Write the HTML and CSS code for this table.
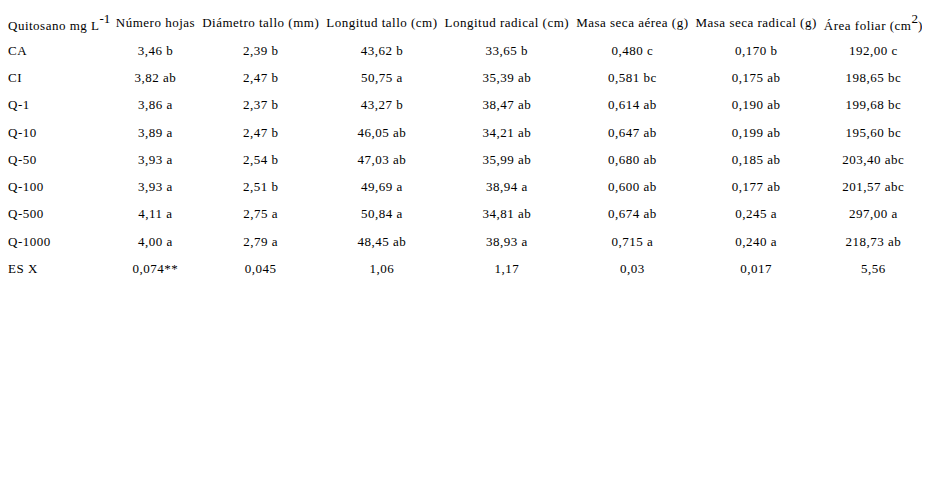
FILE: index.html
```html
<!DOCTYPE html>
<html>
<head>
<meta charset="utf-8">
<link rel="stylesheet" href="styles.css">
</head>
<body>
<table class="data">
  <thead>
    <tr>
      <th class="first">Quitosano mg L<sup>-1</sup></th>
      <th>Número hojas</th>
      <th>Diámetro tallo (mm)</th>
      <th>Longitud tallo (cm)</th>
      <th>Longitud radical (cm)</th>
      <th>Masa seca aérea (g)</th>
      <th>Masa seca radical (g)</th>
      <th>Área foliar (cm<sup>2</sup>)</th>
    </tr>
  </thead>
  <tbody>
    <tr><td class="first">CA</td><td>3,46 b</td><td>2,39 b</td><td>43,62 b</td><td>33,65 b</td><td>0,480 c</td><td>0,170 b</td><td>192,00 c</td></tr>
    <tr><td class="first">CI</td><td>3,82 ab</td><td>2,47 b</td><td>50,75 a</td><td>35,39 ab</td><td>0,581 bc</td><td>0,175 ab</td><td>198,65 bc</td></tr>
    <tr><td class="first">Q-1</td><td>3,86 a</td><td>2,37 b</td><td>43,27 b</td><td>38,47 ab</td><td>0,614 ab</td><td>0,190 ab</td><td>199,68 bc</td></tr>
    <tr><td class="first">Q-10</td><td>3,89 a</td><td>2,47 b</td><td>46,05 ab</td><td>34,21 ab</td><td>0,647 ab</td><td>0,199 ab</td><td>195,60 bc</td></tr>
    <tr><td class="first">Q-50</td><td>3,93 a</td><td>2,54 b</td><td>47,03 ab</td><td>35,99 ab</td><td>0,680 ab</td><td>0,185 ab</td><td>203,40 abc</td></tr>
    <tr><td class="first">Q-100</td><td>3,93 a</td><td>2,51 b</td><td>49,69 a</td><td>38,94 a</td><td>0,600 ab</td><td>0,177 ab</td><td>201,57 abc</td></tr>
    <tr><td class="first">Q-500</td><td>4,11 a</td><td>2,75 a</td><td>50,84 a</td><td>34,81 ab</td><td>0,674 ab</td><td>0,245 a</td><td>297,00 a</td></tr>
    <tr><td class="first">Q-1000</td><td>4,00 a</td><td>2,79 a</td><td>48,45 ab</td><td>38,93 a</td><td>0,715 a</td><td>0,240 a</td><td>218,73 ab</td></tr>
    <tr><td class="first">ES X</td><td>0,074**</td><td>0,045</td><td>1,06</td><td>1,17</td><td>0,03</td><td>0,017</td><td>5,56</td></tr>
  </tbody>
</table>
</body>
</html>
```
FILE: styles.css
```css
html, body {
  background: #fff;
}
body {
  margin: 8px;
  font-family: "Liberation Serif", "Times New Roman", serif;
  font-size: 13px;
  letter-spacing: 0.5px;
  line-height: 15px;
  color: #000;
}
.data {
  border-collapse: collapse;
}
.data th {
  font-weight: normal;
  text-align: center;
  white-space: nowrap;
  padding: 0 3.5px;
  height: 28.5px;
  vertical-align: middle;
}
.data td {
  text-align: center;
  white-space: nowrap;
  padding: 0 3.5px;
  height: 27.3px;
  vertical-align: middle;
}
.data .first {
  text-align: left;
  padding-left: 0;
  padding-right: 2px;
}
.data .last {
  padding-right: 0;
}
.data sup {
  font-size: 13px;
  vertical-align: 7px;
  letter-spacing: 0;
}
```
